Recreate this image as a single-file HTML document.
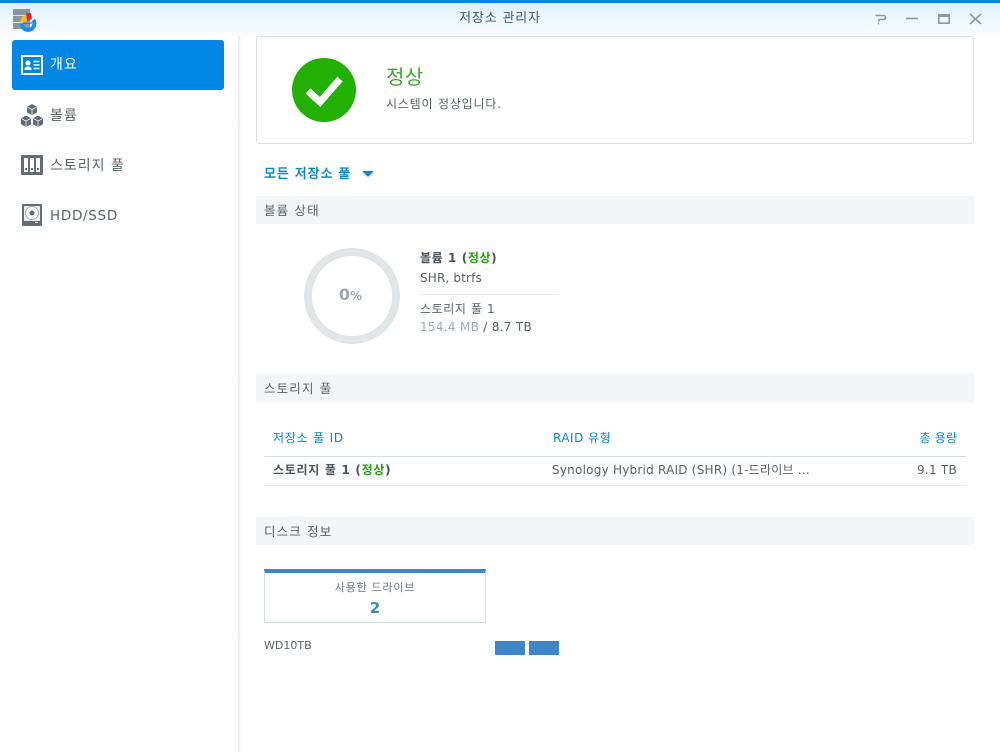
<!DOCTYPE html>
<html lang="ko"><head><meta charset="utf-8"><title>저장소 관리자</title>
<style>
html,body{margin:0;padding:0;width:1000px;height:752px;overflow:hidden;background:#fff}
body{position:relative;font-family:"DejaVu Sans","Noto Sans CJK KR",sans-serif;font-size:12px;color:#5a6269}
.a{position:absolute;white-space:nowrap}
.t{line-height:20px}
.sec{position:absolute;left:256px;width:718px;height:28px;background:#f3f5f7;line-height:29px;text-indent:8px;font-size:12.5px;letter-spacing:1.15px;color:#5a6269}
.nav{position:absolute;left:50px;font-size:14px;line-height:20px;letter-spacing:1px;color:#5a6269}
.blue{color:#0a86cc}
.g{color:#22a20c}
</style></head><body>
<div class="a" style="left:0;top:0;width:1000px;height:3px;background:#0086e5"></div>
<div class="a" style="left:0;top:3px;width:1000px;height:33px;background:linear-gradient(#dff0fd,#fbfdff)"></div>
<div class="a t" style="left:0;width:1000px;top:9px;text-align:center;font-size:13px;letter-spacing:.85px;color:#3c5a78">저장소 관리자</div>
<svg class="a" style="left:12px;top:8px" width="25" height="24" viewBox="0 0 25 24">
<rect x="1" y="1" width="17" height="20" rx="1.5" fill="#8a959e"/><rect x="1" y="7" width="17" height="1" fill="#e2e2e2"/><rect x="1" y="14" width="17" height="1" fill="#e2e2e2"/>
<path d="M8 15a8 8 0 0 1 7-8v6z" fill="#f4c21f"/><path d="M14 5h5l1 6-5 2z" fill="#d62b2b"/>
<path d="M9.500 16a6.500 6.500 0 1 0 12-4" fill="none" stroke="#1b8fe6" stroke-width="4"/><path d="M11 15h9" stroke="#33506a" stroke-width="1"/></svg>
<svg class="a" style="left:870px;top:10px" width="112" height="18" viewBox="0 0 112 18" fill="none" stroke="#8d9aa6" stroke-width="1.6">
<path d="M5.500 5.500h7.500c2 0 2.500 1 2.500 2s-.5 2-2.500 2h-4v2"/><rect x="7.700" y="12.800" width="1.600" height="1.600" fill="#8d9aa6" stroke="none"/>
<path d="M36 8.500h12"/><path d="M68.800 4.800h10.400v8.400h-10.400z"/><rect x="68" y="4" width="12" height="3" fill="#8d9aa6" stroke="none"/>
<path d="M100 4l11 10M111 4l-11 10"/></svg>
<div class="a" style="left:238px;top:36px;width:3px;height:716px;background:linear-gradient(90deg,#e9ebee,#f7f8f9)"></div>
<div class="a" style="left:12px;top:40px;width:212px;height:50px;background:#0086e5;border-radius:3px"></div>
<svg class="a" style="left:21px;top:55px" width="22" height="20" viewBox="0 0 22 20"><rect x="1" y="1" width="20" height="18" fill="none" stroke="#fff" stroke-width="2"/><circle cx="7" cy="8" r="2.500" fill="#fff"/><path d="M3.500 15v-1.500c0-1.200 2-2 3.500-2s3.500.8 3.500 2V15z" fill="#fff"/><path d="M12.500 6.500h6M12.500 10h6M12.500 13.500h6" stroke="#fff" stroke-width="1.400"/></svg>
<div class="nav" style="top:55px;color:#fff">개요</div>
<svg class="a" style="left:20px;top:103px" width="24" height="25" viewBox="0 0 24 25" fill="#5f6a74"><path d="M12 1l5 2.800v5.700l-5 2.800-5-2.800V3.800z"/><path d="M6 12.500l5 2.800v5.900l-5 2.800-5-2.800v-5.900z"/><path d="M18 12.500l5 2.800v5.900l-5 2.800-5-2.800v-5.900z"/><path d="M7 3.800l5 2.800 5-2.800M12 6.600v5.700M1 15.300l5 2.800 5-2.800M6 18.100v5.900M13 15.300l5 2.800 5-2.800M18 18.100v5.900" stroke="#fff" stroke-width=".8" fill="none"/></svg>
<div class="nav" style="top:106px">볼륨</div>
<svg class="a" style="left:21px;top:155px" width="22" height="20" viewBox="0 0 22 20"><rect width="22" height="20" rx="1" fill="#626c76"/><rect x="3" y="3" width="4" height="14" fill="#fff"/><rect x="9" y="3" width="4" height="14" fill="#fff"/><rect x="15" y="3" width="4" height="14" fill="#fff"/><rect x="4" y="13" width="2" height="2" fill="#626c76"/><rect x="10" y="13" width="2" height="2" fill="#626c76"/><rect x="16" y="13" width="2" height="2" fill="#626c76"/></svg>
<div class="nav" style="top:156px">스토리지 풀</div>
<svg class="a" style="left:22px;top:204px" width="20" height="22" viewBox="0 0 20 22"><rect width="20" height="22" rx="1" fill="#626c76"/><rect x="2" y="2" width="16" height="18" fill="#eceef0"/><circle cx="10" cy="9" r="6.500" fill="#fff" stroke="#9aa2a9" stroke-width=".8"/><circle cx="10" cy="9" r="2.500" fill="#626c76"/><rect x="2" y="17" width="16" height="3" fill="#626c76"/><rect x="13" y="18" width="3" height="1" fill="#fff"/></svg>
<div class="nav" style="top:206px;font-size:13.5px;letter-spacing:.7px">HDD/SSD</div>

<div class="a" style="left:256px;top:36px;width:716px;height:106px;border:1px solid #d9dee3;border-radius:3px;background:#fff"></div>
<svg class="a" style="left:292px;top:58px" width="64" height="64" viewBox="0 0 64 64"><circle cx="32" cy="32" r="32" fill="#22b003"/><path d="M16 33l12 11 20-23" fill="none" stroke="#fff" stroke-width="7"/></svg>
<div class="a" style="left:386px;top:64px;font-size:20px;line-height:26px;letter-spacing:.5px;color:#3fa62c">정상</div>
<div class="a t" style="left:386px;top:94px;font-size:12px;letter-spacing:.8px">시스템이 정상입니다.</div>
<div class="a t blue" style="left:264px;top:165px;font-size:13px;letter-spacing:.9px;font-weight:500;-webkit-text-stroke:.2px #0a86cc">모든 저장소 풀</div>
<div class="a" style="left:362px;top:171px;width:0;height:0;border-left:6px solid transparent;border-right:6px solid transparent;border-top:6px solid #0a86d8"></div>
<div class="sec" style="top:196px">볼륨 상태</div>
<div class="a" style="left:304px;top:248px;width:80px;height:80px;border:8px solid #e1e5e7;border-radius:50%"></div>
<div class="a" style="left:304px;width:93px;top:285px;text-align:center;line-height:20px;font-weight:bold;color:#a0a8af;font-size:16px">0<span style="font-size:12px">%</span></div>
<div class="a t" style="left:420px;top:248px;font-weight:bold;font-size:12px;letter-spacing:.6px;color:#4c545c">볼륨 1 (<span class="g">정상</span>)</div>
<div class="a t" style="left:420px;top:268px;font-size:12px;letter-spacing:.15px">SHR, btrfs</div>
<div class="a" style="left:420px;top:294px;width:138px;height:1px;background:#e5e8eb"></div>
<div class="a t" style="left:420px;top:299px;font-size:12px;letter-spacing:.6px">스토리지 풀 1</div>
<div class="a t" style="left:420px;top:317px;font-size:12px;letter-spacing:.3px"><span style="color:#a0a8b0">154.4 MB</span> / 8.7 TB</div>
<div class="sec" style="top:374px">스토리지 풀</div>
<div class="a t blue" style="left:273px;top:428px;font-size:12px;letter-spacing:.8px">저장소 풀 ID</div>
<div class="a t blue" style="left:553px;top:428px;font-size:12px;letter-spacing:.5px">RAID 유형</div>
<div class="a t blue" style="right:43px;top:428px;font-size:12px;letter-spacing:.1px">총 용량</div>
<div class="a" style="left:264px;top:456px;width:702px;height:1px;background:#d5dce2"></div>
<div class="a t" style="left:273px;top:460px;font-weight:bold;font-size:12px;letter-spacing:.7px;color:#4c545c">스토리지 풀 1 (<span class="g">정상</span>)</div>
<div class="a t" style="left:552px;top:460px;font-size:12px;letter-spacing:.23px">Synology Hybrid RAID (SHR) (1-드라이브 ...</div>
<div class="a t" style="right:43px;top:460px;font-size:12px;letter-spacing:.25px">9.1 TB</div>
<div class="a" style="left:264px;top:485px;width:702px;height:1px;background:#e8ebee"></div>
<div class="sec" style="top:517px">디스크 정보</div>
<div class="a" style="left:264px;top:569px;width:220px;height:49px;border:1px solid #d3dde6;border-top:4px solid #3f86c9;background:#fff"></div>
<div class="a t" style="left:264px;width:222px;top:578px;text-align:center;font-size:11px;letter-spacing:.75px;color:#6a737c">사용한 드라이브</div>
<div class="a t" style="left:264px;width:222px;top:598px;text-align:center;font-weight:bold;font-size:15px;color:#3f86c9">2</div>
<div class="a t" style="left:264px;top:636px;font-size:11px">WD10TB</div>
<div class="a" style="left:495px;top:641px;width:30px;height:14px;background:#3f86c9"></div>
<div class="a" style="left:529px;top:641px;width:30px;height:14px;background:#3f86c9"></div>
</body></html>
